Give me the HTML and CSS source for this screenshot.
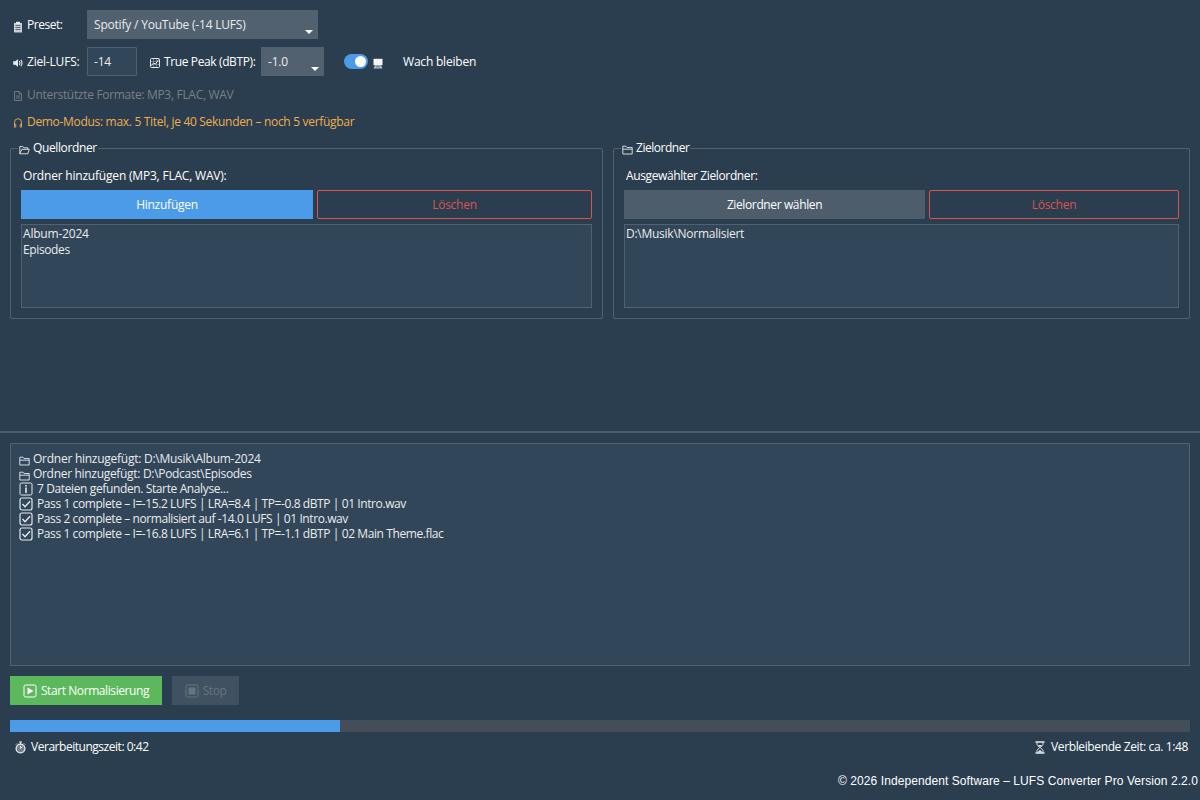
FILE: index.html
```
<!DOCTYPE html>
<html lang="de">
<head>
    <meta charset="UTF-8">
    <meta name="viewport" content="width=device-width, initial-scale=1.0">
    <title>LUFS Converter Pro</title>
    <link rel="stylesheet" href="styles.css">
</head>
<body>
    <!-- Icons -->
    <svg class="sprite">
        <symbol id="i-clip" viewBox="0 0 10 12">
            <path d="M1 2h8v9.500H1z" fill="#c9d0d4"/>
            <path d="M3 .8h4v2H3z" fill="#eee"/>
            <path d="M2.500 4.500h5M2.500 6.500h5M2.500 8.500h5" stroke="#5b6a77" fill="none"/>
        </symbol>
        <symbol id="i-speaker" viewBox="0 0 10 10">
            <path d="M.2 3.200h2L5 1.200v7.600L2.200 6.800h-2z" fill="currentColor"/>
            <path d="M6.300 3q1.200 2 0 4M7.800 1.800q2.400 3.200 0 6.400" stroke="currentColor" fill="none" stroke-width="1.100"/>
        </symbol>
        <symbol id="i-chart" viewBox="0 0 12 12">
            <rect x="1.500" y="1.500" width="9" height="9" rx="1" stroke="currentColor" fill="none"/>
            <path d="M2 4.500h8M2 7.500h8M4.500 2v8M7.500 2v8" stroke="#8793a0" stroke-width=".7"/>
            <path d="M2.500 8.500l2-2.500 2 1L9.800 2.500" stroke="currentColor" fill="none"/>
        </symbol>
        <symbol id="i-page" viewBox="0 0 10 12">
            <path d="M1.500 1.500h4.500l2.500 2.500v6.500h-7zM6 1.500V4h2.500M3 6h4M3 8h4" stroke="currentColor" fill="none" stroke-width=".9"/>
        </symbol>
        <symbol id="i-phones" viewBox="0 0 10 12">
            <path d="M1.500 8.500V5.500a3.500 3.800 0 0 1 7 0v3" stroke="currentColor" fill="none" stroke-width=".9"/>
            <path d="M1.500 7.200h1.300v3H1.500zM7.200 7.200h1.300v3H7.200z" stroke="currentColor" fill="none" stroke-width=".8"/>
        </symbol>
        <symbol id="i-laptop" viewBox="0 0 10 11">
            <path d="M.5.800h9v6.400h-9z" fill="#f4f4f4"/>
            <path d="M2 7.200h6l1.500 3.300h-9z" fill="#b8bfc4"/>
            <path d="M2.800 8.800h4.400" stroke="#6b7884"/>
        </symbol>
        <symbol id="i-open" viewBox="0 0 11 10">
            <path d="M.8 8.500V1.500h3l1 1.300h4v1.500M.8 8.800l2-4.500h7.500l-1.500 4.500z" stroke="currentColor" fill="none" stroke-width=".9"/>
        </symbol>
        <symbol id="i-folder" viewBox="0 0 11 10">
            <path d="M.8 9V1.200h3.200l1 1.300h5.200V9zM.8 4.200h9.400" stroke="currentColor" fill="none" stroke-width=".9"/>
        </symbol>
        <symbol id="i-info" viewBox="0 0 14 14">
            <rect x="1" y="1" width="12" height="12" rx="1.500" stroke="currentColor" fill="none"/>
            <path d="M6.200 3h1.600v1.500H6.200zM6.200 5.500h1.600V11H6.200z" fill="currentColor"/>
        </symbol>
        <symbol id="i-check" viewBox="0 0 14 14">
            <rect x="1" y="1" width="12" height="12" rx="2" stroke="currentColor" fill="none" stroke-width="1.200"/>
            <path d="M3.500 7l2.500 2.700 5-5.400" stroke="currentColor" fill="none" stroke-width="1.400"/>
        </symbol>
        <symbol id="i-play" viewBox="0 0 14 14">
            <rect x="1" y="1" width="12" height="12" rx="1.500" stroke="currentColor" fill="none"/>
            <path d="M4.500 3.500L10.500 7l-6 3.500z" fill="currentColor"/>
        </symbol>
        <symbol id="i-stop" viewBox="0 0 14 14">
            <rect x="1" y="1" width="12" height="12" rx="1.500" stroke="currentColor" fill="none"/>
            <path d="M3.500 3.500h7v7h-7z" fill="currentColor"/>
        </symbol>
        <symbol id="i-watch" viewBox="0 0 11 13">
            <circle cx="5.500" cy="7.500" r="4.400" stroke="currentColor" fill="#74818c" stroke-width="1.300"/>
            <path d="M4 1h3M5.500 1v2.500M9 2.500l1 1M2 2.500l-1 1M5.500 7.500l2-2M5.500 5v2.500" stroke="currentColor" fill="none"/>
        </symbol>
        <symbol id="i-glass" viewBox="0 0 10 13">
            <path d="M.5 1h9M.5 12h9" stroke="currentColor" stroke-width="1.300"/>
            <path d="M2 1.500v2L4.500 6.500 2 9.500v2M8 1.500v2L5.500 6.500 8 9.500v2" stroke="currentColor" fill="none"/>
            <path d="M3 4h4L5 6.300zM2.500 11.500L5 8.700l2.500 2.800z" fill="currentColor"/>
        </symbol>
    </svg>

    <div class="app">
        <div class="row">
            <label class="caption"><svg class="icon ic-clip"><use href="#i-clip"/></svg><span class="tightest">Preset:</span></label>
            <div class="combo combo-preset">Spotify / YouTube (-14 LUFS)</div>
        </div>

        <div class="row">
            <label class="caption"><svg class="icon ic-speaker"><use href="#i-speaker"/></svg><span>Ziel-LUFS:</span></label>
            <div class="entry">-14</div>
            <label class="caption peak"><svg class="icon ic-chart"><use href="#i-chart"/></svg><span class="tighter">True Peak (dBTP):</span></label>
            <div class="combo combo-peak">-1.0</div>
            <div class="toggle"><span class="knob"></span></div>
            <svg class="icon ic-laptop"><use href="#i-laptop"/></svg>
            <span class="awake">Wach bleiben</span>
        </div>

        <div class="hint"><svg class="icon ic-page"><use href="#i-page"/></svg><span class="tight">Unterstützte Formate: MP3, FLAC, WAV</span></div>
        <div class="hint demo"><svg class="icon ic-page"><use href="#i-phones"/></svg><span class="tight">Demo-Modus: max. 5 Titel, je 40 Sekunden – noch 5 verfügbar</span></div>

        <div class="folders">
            <fieldset class="group">
                <legend><svg class="icon ic-folder"><use href="#i-open"/></svg><span class="tighter">Quellordner</span></legend>
                <div class="group-label">Ordner hinzufügen (MP3, FLAC, WAV):</div>
                <div class="buttons source-buttons">
                    <button class="btn primary">Hinzufügen</button>
                    <button class="btn danger">Löschen</button>
                </div>
                <div class="list"><div>Album-2024</div><div class="tighter">Episodes</div></div>
            </fieldset>
            <fieldset class="group">
                <legend><svg class="icon ic-folder"><use href="#i-folder"/></svg><span class="tightest">Zielordner</span></legend>
                <div class="group-label tighter">Ausgewählter Zielordner:</div>
                <div class="buttons dest-buttons">
                    <button class="btn secondary tighter">Zielordner wählen</button>
                    <button class="btn danger">Löschen</button>
                </div>
                <div class="list"><div class="snug">D:\Musik\Normalisiert</div></div>
            </fieldset>
        </div>
    </div>

    <div class="sash"></div>

    <div class="bottom">
        <div class="log">
            <div class="line"><svg class="icon ic-folder"><use href="#i-folder"/></svg><span class="snug">Ordner hinzugefügt: D:\Musik\Album-2024</span></div>
            <div class="line"><svg class="icon ic-folder"><use href="#i-folder"/></svg><span class="tight">Ordner hinzugefügt: D:\Podcast\Episodes</span></div>
            <div class="line"><svg class="icon ic-box"><use href="#i-info"/></svg><span class="tighter">7 Dateien gefunden. Starte Analyse...</span></div>
            <div class="line"><svg class="icon ic-box"><use href="#i-check"/></svg><span class="pass">Pass 1 complete – I=-15.2 LUFS | LRA=8.4 | TP=-0.8 dBTP | 01 Intro.wav</span></div>
            <div class="line"><svg class="icon ic-box"><use href="#i-check"/></svg><span class="pass">Pass 2 complete – normalisiert auf -14.0 LUFS | 01 Intro.wav</span></div>
            <div class="line"><svg class="icon ic-box"><use href="#i-check"/></svg><span class="pass">Pass 1 complete – I=-16.8 LUFS | LRA=6.1 | TP=-1.1 dBTP | 02 Main Theme.flac</span></div>
        </div>

        <div class="actions">
            <button class="btn success"><svg class="icon ic-box"><use href="#i-play"/></svg><span class="pass">Start Normalisierung</span></button>
            <button class="btn disabled" disabled><svg class="icon ic-box"><use href="#i-stop"/></svg><span class="tightest">Stop</span></button>
        </div>

        <div class="progress"><div class="bar"></div></div>

        <div class="times">
            <div class="time"><svg class="icon ic-watch"><use href="#i-watch"/></svg><span class="tightest">Verarbeitungszeit: 0:42</span></div>
            <div class="time"><svg class="icon ic-glass"><use href="#i-glass"/></svg><span class="tighter">Verbleibende Zeit: ca. 1:48</span></div>
        </div>
    </div>

    <footer>© 2026 Independent Software – LUFS Converter Pro Version 2.2.0</footer>
</body>
</html>
```
FILE: styles.css
```
* {
    box-sizing: border-box;
}
body {
    margin: 0;
    width: 1200px;
    height: 800px;
    overflow: hidden;
    display: flex;
    flex-direction: column;
    background: #2b3e50;
    color: #fff;
    font: 12px/16px "Open Sans", "Noto Sans", sans-serif;
    letter-spacing: -0.2px;
    white-space: nowrap;
}
/* Letter spacing steps */
.snug {
    letter-spacing: -0.26px;
}
.tight {
    letter-spacing: -0.31px;
}
.tighter {
    letter-spacing: -0.38px;
}
.pass {
    letter-spacing: -0.41px;
}
.tightest {
    letter-spacing: -0.47px;
}
.sprite {
    display: none;
}
.icon {
    flex: none;
    display: block;
    color: #e6e9eb;
}
.app {
    height: 431px;
    padding: 10px 10px 0;
}
.row {
    display: flex;
    align-items: center;
    height: 29px;
    margin-bottom: 8px;
}
.caption {
    display: flex;
    align-items: center;
    width: 77px;
    padding-left: 3px;
}
.ic-clip {
    width: 10px;
    height: 12px;
    margin: 4px 4px 0 0;
}
.ic-speaker {
    width: 10px;
    height: 10px;
    margin: 3px 4px 0 0;
}
.ic-chart {
    width: 12px;
    height: 12px;
    margin: 3px 3px 0 0;
}
.combo {
    position: relative;
    height: 29px;
    padding: 7px 7px 6px;
    background: #526170;
    color: #ebebeb;
}
.combo::after {
    content: "";
    position: absolute;
    right: 5px;
    bottom: 5px;
    border: 4px solid transparent;
    border-top-color: #fff;
    border-bottom: 0;
}
.combo-preset {
    width: 231px;
}
.combo-peak {
    width: 63px;
}
.entry {
    width: 50px;
    height: 29px;
    padding: 6px 6px 5px;
    background: #32465a;
    border: 1px solid #526170;
    border-radius: 1px;
    color: #ebebeb;
}
.peak {
    width: 124px;
    padding-left: 12px;
}
.toggle {
    width: 24px;
    height: 15px;
    margin-left: 20px;
    padding: 2px;
    border-radius: 8px;
    background: #4c9be8;
}
.knob {
    display: block;
    width: 11px;
    height: 11px;
    margin-left: 9px;
    border-radius: 50%;
    background: #fff;
}
.ic-laptop {
    width: 10px;
    height: 11px;
    margin: 4px 20px 0 5px;
}
.hint {
    display: flex;
    align-items: center;
    height: 20px;
    margin-bottom: 7px;
    padding: 1px 0 0 3px;
    color: #7b7f83;
}
.hint .icon {
    color: inherit;
}
.demo {
    color: #f0ad4e;
}
.ic-page {
    width: 10px;
    height: 12px;
    margin: 3px 4px 0 0;
}
.folders {
    display: flex;
    gap: 10px;
    margin-top: 9px;
}
.group {
    width: 593px;
    height: 179px;
    margin: 0;
    padding: 12px 10px 0;
    border: 1px solid #526170;
    border-radius: 2px;
    min-width: 0;
}
.group + .group {
    width: 577px;
}
legend {
    display: flex;
    align-items: center;
    height: 16px;
    margin-left: -3px;
    padding: 0 1px 0 0;
}
.ic-folder {
    width: 11px;
    height: 10px;
    margin: 4px 3px 0 1px;
}
.group-label {
    height: 22px;
    padding-left: 2px;
}
.buttons {
    display: grid;
    gap: 4px;
    margin-bottom: 5px;
}
.source-buttons {
    grid-template-columns: 292px 275px;
}
.dest-buttons {
    grid-template-columns: 301px 250px;
}
.btn {
    display: flex;
    align-items: center;
    justify-content: center;
    height: 29px;
    padding: 0;
    border: 0;
    color: #fff;
    font: inherit;
}
.primary,
.danger {
    letter-spacing: -0.25px;
}
.primary {
    background: #4c9be8;
}
.secondary {
    background: #4e5d6c;
}
.danger {
    background: none;
    border: 1px solid #d9534f;
    border-radius: 2px;
    color: #d9534f;
}
.list {
    height: 84px;
    padding: 1px;
    background: #32465a;
    border: 1px solid #526170;
    color: #ebebeb;
}
.sash {
    height: 2px;
    background: #4e5d6c;
}
.bottom {
    padding: 10px 10px 0;
}
.log {
    height: 223px;
    padding: 7px 8px;
    background: #32465a;
    border: 1px solid #526170;
    color: #ebebeb;
}
.line {
    display: flex;
    align-items: center;
    height: 15px;
    line-height: 15px;
}
.log .ic-folder {
    margin-left: 0;
}
.ic-box {
    width: 14px;
    height: 14px;
    margin-right: 4px;
}
.actions {
    display: flex;
    gap: 10px;
    margin: 10px 0 15px;
}
.actions .icon {
    color: inherit;
}
.success {
    width: 152px;
    background: #5cb85c;
}
.disabled {
    width: 67px;
    background: #405161;
    color: #67747f;
}
.progress {
    height: 12px;
    background: #434e59;
}
.bar {
    width: 330px;
    height: 12px;
    background: #4c9be8;
}
.times {
    display: flex;
    justify-content: space-between;
    padding: 7px 2px 0 5px;
}
.time {
    display: flex;
    align-items: center;
}
.ic-watch {
    width: 11px;
    height: 13px;
    margin-right: 5px;
}
.ic-glass {
    width: 10px;
    height: 13px;
    margin-right: 6px;
}
footer {
    margin-top: 18px;
    padding-right: 2px;
    text-align: right;
    font-family: "Liberation Sans", Arial, sans-serif;
    letter-spacing: 0.08px;
}
```
